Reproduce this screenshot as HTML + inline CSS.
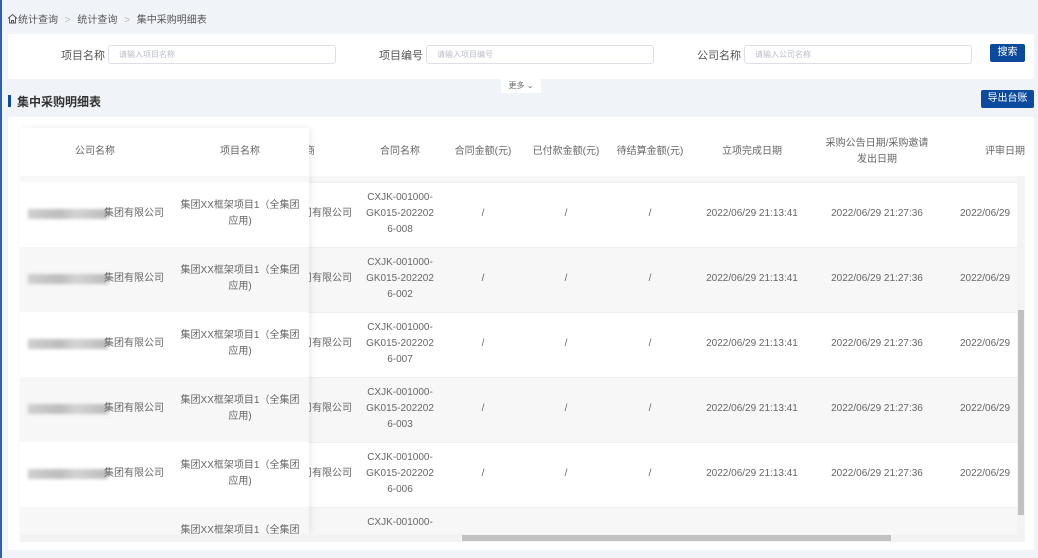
<!DOCTYPE html>
<html><head><meta charset="utf-8"><style>
*{margin:0;padding:0;box-sizing:border-box}
body{width:1038px;height:558px;background:#f0f3f8;font-family:"Liberation Sans","Noto Sans CJK SC",sans-serif;position:relative;overflow:hidden;color:#606266}
.a{position:absolute}
.lbl{font-size:11px;color:#555;}
.inp{position:absolute;height:19px;border:1px solid #dcdfe6;border-radius:3px;background:#fff;font-size:8px;color:#b8bcc4;padding:4px 10px;line-height:10px}
.c{position:absolute;text-align:center;font-size:10px;color:#666;line-height:16px}
.h{position:absolute;text-align:center;font-size:10px;color:#666;line-height:16px}
.blur{position:absolute;height:10px;background:linear-gradient(90deg,#cfcfcf,#bdbdbd 40%,#d3d3d3 60%,#bbb);filter:blur(1.5px)}
</style></head><body>
<div class="a" style="left:0;top:0;width:2px;height:558px;background:#2d5fb5"></div>
<div class="a" style="left:7px;top:11px;font-size:10px;color:#555;">
<svg width="11" height="11" viewBox="0 0 11 11" style="vertical-align:-1px"><path d="M1 5.5L5.5 1.5L10 5.5M2.5 4.5V10H8.5V4.5M4.5 10V7.5H6.5V10" fill="none" stroke="#555" stroke-width="1"/></svg>统计查询 <span style="color:#bbb;margin:0 4px">&gt;</span> 统计查询 <span style="color:#bbb;margin:0 4px">&gt;</span> 集中采购明细表</div>
<div class="a" style="left:8px;top:34px;width:1026px;height:45px;background:#fff;border-radius:2px"></div>
<div class="a lbl" style="left:61px;top:47px">项目名称</div>
<div class="inp" style="left:108px;top:45px;width:228px">请输入项目名称</div>
<div class="a lbl" style="left:379px;top:47px">项目编号</div>
<div class="inp" style="left:426px;top:45px;width:228px">请输入项目编号</div>
<div class="a lbl" style="left:697px;top:47px">公司名称</div>
<div class="inp" style="left:744px;top:45px;width:228px">请输入公司名称</div>
<div class="a" style="left:990px;top:44px;width:35px;height:18px;background:#0b4a9c;color:#fff;font-size:10px;text-align:center;line-height:18px;border-radius:2px">搜索</div>
<div class="a" style="left:501px;top:78px;width:40px;height:15px;background:#fff;font-size:8px;color:#666;text-align:center;line-height:15px">更多 ⌄</div>
<div class="a" style="left:8px;top:95px;width:3px;height:12px;background:#0b4a9c"></div>
<div class="a" style="left:17px;top:93px;font-size:12px;font-weight:bold;color:#333">集中采购明细表</div>
<div class="a" style="left:981px;top:90px;width:53px;height:18px;background:#0b4a9c;color:#fff;font-size:10px;text-align:center;line-height:18px;border-radius:2px">导出台账</div>
<div class="a" style="left:8px;top:117px;width:1026px;height:433px;background:#fff"></div>
<div class="a" style="left:0;top:0;width:1038px;height:534px;overflow:hidden">
<div class="a" style="left:20px;top:176px;width:997px;height:6px;background:#f7f7f7"></div>
<div class="a" style="left:20px;top:182px;width:997px;height:65px;background:#fff;border-top:1px solid #f0f0f0"></div>
<div class="a" style="left:20px;top:247px;width:997px;height:65px;background:#f7f7f7;border-top:1px solid #eee"></div>
<div class="a" style="left:20px;top:312px;width:997px;height:65px;background:#fff;border-top:1px solid #eee"></div>
<div class="a" style="left:20px;top:377px;width:997px;height:65px;background:#f7f7f7;border-top:1px solid #eee"></div>
<div class="a" style="left:20px;top:442px;width:997px;height:65px;background:#fff;border-top:1px solid #eee"></div>
<div class="a" style="left:20px;top:507px;width:997px;height:27px;background:#f7f7f7;border-top:1px solid #eee"></div>
<div class="h" style="left:270px;top:144px;width:60px">供应商</div>
<div class="h" style="left:360px;top:144px;width:80px">合同名称</div>
<div class="h" style="left:443px;top:144px;width:80px">合同金额(元)</div>
<div class="h" style="left:526px;top:144px;width:80px">已付款金额(元)</div>
<div class="h" style="left:610px;top:144px;width:80px">待结算金额(元)</div>
<div class="h" style="left:702px;top:144px;width:100px">立项完成日期</div>
<div class="h" style="left:817px;top:136px;width:120px">采购公告日期/采购邀请<br>发出日期</div>
<div class="h" style="left:975px;top:144px;width:60px">评审日期</div>
<div id="cells"></div>
</div>
<div class="a" style="left:20px;top:128px;width:289px;height:406px;overflow:hidden;box-shadow:2px 0 6px rgba(0,0,0,.08)">
 <div class="a" style="left:0;top:0;width:289px;height:48px;background:#fff"></div>
 <div class="h" style="left:35px;top:16px;width:80px">公司名称</div>
 <div class="h" style="left:180px;top:16px;width:80px">项目名称</div>
 <div class="a" style="left:0;top:48px;width:289px;height:6px;background:#f7f7f7"></div>
 <div class="a" style="left:0;top:54px;width:289px;height:65px;background:#fff"></div>
 <div class="a" style="left:0;top:119px;width:289px;height:65px;background:#f7f7f7"></div>
 <div class="a" style="left:0;top:184px;width:289px;height:65px;background:#fff"></div>
 <div class="a" style="left:0;top:249px;width:289px;height:65px;background:#f7f7f7"></div>
 <div class="a" style="left:0;top:314px;width:289px;height:65px;background:#fff"></div>
 <div class="a" style="left:0;top:379px;width:289px;height:27px;background:#f7f7f7"></div>
 <div id="fx"></div>
</div>
<div class="a" style="left:1017px;top:176px;width:8px;height:358px;background:#f3f3f3"></div>
<div class="a" style="left:1018px;top:310px;width:6px;height:205px;background:#c1c1c1"></div>
<div class="a" style="left:20px;top:534px;width:1005px;height:8px;background:#f3f3f3"></div>
<div class="a" style="left:462px;top:535px;width:429px;height:6px;background:#c1c1c1"></div>
<script>
var ids=["008","002","007","003","006",""];
var s="",f="";
for(var i=0;i<6;i++){
 var cy=214+i*65, fy=cy-128;
 var last=(i==5);
 s+='<div class="c" style="left:300px;top:'+(cy-8)+'px;width:52px;text-align:right">'+(i<5?'司有限公司':'')+'</div>';
 s+='<div class="c" style="left:355px;top:'+(cy-24)+'px;width:90px;'+(last?'height:16px;overflow:hidden':'')+'">CXJK-001000-<br>GK015-202202<br>6-'+ids[i]+'</div>';
 if(i<5){
 s+='<div class="c" style="left:443px;top:'+(cy-8)+'px;width:80px">/</div>';
 s+='<div class="c" style="left:526px;top:'+(cy-8)+'px;width:80px">/</div>';
 s+='<div class="c" style="left:610px;top:'+(cy-8)+'px;width:80px">/</div>';
 s+='<div class="c" style="left:692px;top:'+(cy-8)+'px;width:120px">2022/06/29 21:13:41</div>';
 s+='<div class="c" style="left:817px;top:'+(cy-8)+'px;width:120px">2022/06/29 21:27:36</div>';
 s+='<div class="c" style="left:960px;top:'+(cy-8)+'px;width:80px;text-align:left">2022/06/29</div>';
 f+='<div class="blur" style="left:8px;top:'+(fy-5)+'px;width:80px"></div>';
 f+='<div class="c" style="left:82px;top:'+(fy-8)+'px;width:62px;text-align:right">集团有限公司</div>';
 }
 f+='<div class="c" style="left:160px;top:'+(fy-16)+'px;width:120px;'+(last?'height:16px;overflow:hidden':'')+'">集团XX框架项目1（全集团<br>应用)</div>';
}
document.getElementById('cells').outerHTML=s;
document.getElementById('fx').outerHTML=f;
</script>
</body></html>
